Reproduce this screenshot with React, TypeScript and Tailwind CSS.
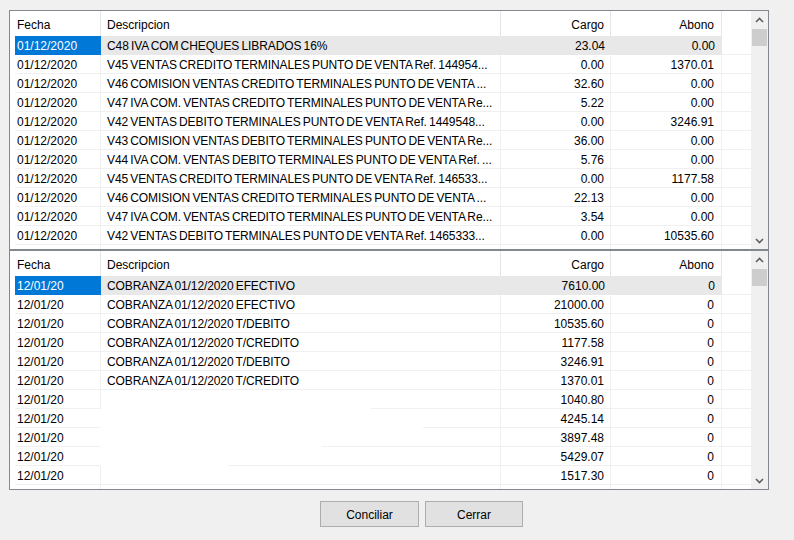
import React from "react";

type Row = {
  fecha: string;
  desc: string;
  cargo: string;
  abono: string;
  // start offset (px) of the visible part of the description cell's bottom rule
  ruleFrom?: number;
  hideFechaRule?: boolean;
};

const movimientos: Row[] = [
  { fecha: "01/12/2020", desc: "C48 IVA COM CHEQUES LIBRADOS 16%", cargo: "23.04", abono: "0.00" },
  { fecha: "01/12/2020", desc: "V45 VENTAS CREDITO TERMINALES PUNTO DE VENTA Ref. 144954...", cargo: "0.00", abono: "1370.01" },
  { fecha: "01/12/2020", desc: "V46 COMISION VENTAS CREDITO TERMINALES PUNTO DE VENTA ...", cargo: "32.60", abono: "0.00" },
  { fecha: "01/12/2020", desc: "V47 IVA COM. VENTAS CREDITO TERMINALES PUNTO DE VENTA Re...", cargo: "5.22", abono: "0.00" },
  { fecha: "01/12/2020", desc: "V42 VENTAS DEBITO TERMINALES PUNTO DE VENTA Ref. 1449548...", cargo: "0.00", abono: "3246.91" },
  { fecha: "01/12/2020", desc: "V43 COMISION VENTAS DEBITO TERMINALES PUNTO DE VENTA Re...", cargo: "36.00", abono: "0.00" },
  { fecha: "01/12/2020", desc: "V44 IVA COM. VENTAS DEBITO TERMINALES PUNTO DE VENTA Ref. ...", cargo: "5.76", abono: "0.00" },
  { fecha: "01/12/2020", desc: "V45 VENTAS CREDITO TERMINALES PUNTO DE VENTA Ref. 146533...", cargo: "0.00", abono: "1177.58" },
  { fecha: "01/12/2020", desc: "V46 COMISION VENTAS CREDITO TERMINALES PUNTO DE VENTA ...", cargo: "22.13", abono: "0.00" },
  { fecha: "01/12/2020", desc: "V47 IVA COM. VENTAS CREDITO TERMINALES PUNTO DE VENTA Re...", cargo: "3.54", abono: "0.00" },
  { fecha: "01/12/2020", desc: "V42 VENTAS DEBITO TERMINALES PUNTO DE VENTA Ref. 1465333...", cargo: "0.00", abono: "10535.60" },
  { fecha: "", desc: "", cargo: "", abono: "" },
];

const cobranzas: Row[] = [
  { fecha: "12/01/20", desc: "COBRANZA 01/12/2020 EFECTIVO", cargo: "7610.00", abono: "0" },
  { fecha: "12/01/20", desc: "COBRANZA 01/12/2020 EFECTIVO", cargo: "21000.00", abono: "0" },
  { fecha: "12/01/20", desc: "COBRANZA 01/12/2020 T/DEBITO", cargo: "10535.60", abono: "0" },
  { fecha: "12/01/20", desc: "COBRANZA 01/12/2020 T/CREDITO", cargo: "1177.58", abono: "0" },
  { fecha: "12/01/20", desc: "COBRANZA 01/12/2020 T/DEBITO", cargo: "3246.91", abono: "0" },
  { fecha: "12/01/20", desc: "COBRANZA 01/12/2020 T/CREDITO", cargo: "1370.01", abono: "0" },
  { fecha: "12/01/20", desc: "", cargo: "1040.80", abono: "0", ruleFrom: 270 },
  { fecha: "12/01/20", desc: "", cargo: "4245.14", abono: "0", ruleFrom: 322, hideFechaRule: true },
  { fecha: "12/01/20", desc: "", cargo: "3897.48", abono: "0", ruleFrom: 221, hideFechaRule: true },
  { fecha: "12/01/20", desc: "", cargo: "5429.07", abono: "0", ruleFrom: 127, hideFechaRule: true },
  { fecha: "12/01/20", desc: "", cargo: "1517.30", abono: "0" },
  { fecha: "", desc: "", cargo: "", abono: "" },
];

function Chevron({ up }: { up?: boolean }) {
  return (
    <svg width="9" height="6" viewBox="0 0 9 6" className="block">
      <polyline
        points={up ? "1,5 4.5,1.5 8,5" : "1,1 4.5,4.5 8,1"}
        fill="none"
        stroke="#606060"
        strokeWidth="1.6"
      />
    </svg>
  );
}

function ScrollBar() {
  return (
    <div className="flex w-[17px] flex-col bg-[#f0f0f0]">
      <div className="flex h-[17px] items-center justify-center">
        <Chevron up />
      </div>
      <div className="ml-px mt-px h-[17px] w-[15px] bg-[#cdcdcd]" />
      <div className="flex-1" />
      <div className="flex h-[17px] items-center justify-center">
        <Chevron />
      </div>
    </div>
  );
}

function Header() {
  return (
    <div className="flex h-[25px] shrink-0 bg-white pl-[5px]">
      <div className="flex w-[86px] items-center border-r border-[#e5e5e5] pl-[2px] pt-[2px]">Fecha</div>
      <div className="flex w-[400px] items-center border-r border-[#e5e5e5] pl-[6px] pt-[2px]">Descripcion</div>
      <div className="flex w-[110px] items-center justify-end border-r border-[#e5e5e5] pr-[6px] pt-[2px]">Cargo</div>
      <div className="flex w-[111px] items-center justify-end border-r border-[#e5e5e5] pr-[7px] pt-[2px]">Abono</div>
      <div className="w-[29px]" />
    </div>
  );
}

function DataRow({ row, selected }: { row: Row; selected: boolean }) {
  if (selected) {
    return (
      <div className="flex h-[19px] shrink-0 pl-[5px]">
        <div className="flex w-[86px] items-center bg-[#0078d7] pl-[2px] pt-px text-white">{row.fecha}</div>
        <div className="flex w-[400px] items-center bg-[#e8e8e8] pl-[6px] pt-px tracking-[-0.1px] [word-spacing:-1px]">
          {row.desc}
        </div>
        <div className="flex w-[110px] items-center justify-end bg-[#e8e8e8] pr-[6px] pt-px">{row.cargo}</div>
        <div className="flex w-[111px] items-center justify-end bg-[#e8e8e8] pr-[7px] pt-px">{row.abono}</div>
        <div className="w-[29px] border-b border-[#f0f0f0]" />
      </div>
    );
  }
  const redacted = row.ruleFrom !== undefined;
  return (
    <div className="flex h-[19px] shrink-0 pl-[5px]">
      <div
        className={
          "flex w-[86px] items-center border-b border-r border-b-[#f0f0f0] pl-[2px] pt-[2px] " +
          (row.hideFechaRule ? "border-r-white" : "border-r-[#f0f0f0]")
        }
      >
        {row.fecha}
      </div>
      {redacted ? (
        <div className="flex w-[400px] flex-col border-r border-[#f0f0f0]">
          <div className="flex-1" />
          <div className="h-px bg-[#f0f0f0]" style={{ marginLeft: row.ruleFrom }} />
        </div>
      ) : (
        <div className="flex w-[400px] items-center overflow-hidden whitespace-nowrap border-b border-r border-[#f0f0f0] pl-[6px] pt-[2px] tracking-[-0.1px] [word-spacing:-1px]">
          {row.desc}
        </div>
      )}
      <div className="flex w-[110px] items-center justify-end border-b border-r border-[#f0f0f0] pr-[6px] pt-[2px]">{row.cargo}</div>
      <div className="flex w-[111px] items-center justify-end border-b border-r border-[#f0f0f0] pr-[7px] pt-[2px]">{row.abono}</div>
      <div className="w-[29px] border-b border-[#f0f0f0]" />
    </div>
  );
}

function Grid({ rows }: { rows: Row[] }) {
  return (
    <div className="flex h-[240px] w-[760px] border border-[#828790] bg-white">
      <div className="flex w-[741px] flex-col overflow-hidden">
        <Header />
        {rows.map((r, i) => (
          <DataRow key={i} row={r} selected={i === 0} />
        ))}
      </div>
      <ScrollBar />
    </div>
  );
}

function Button({ label, w }: { label: string; w: string }) {
  return (
    <button
      className={
        "flex h-[26px] items-center justify-center border border-[#adadad] bg-[#e1e1e1] pt-px text-black " + w
      }
    >
      {label}
    </button>
  );
}

export default function App() {
  return (
    <div
      className="h-[540px] w-[794px] bg-[#f0f0f0] pl-[9px] pt-[10px] text-[12px] leading-none text-black"
      style={{ fontFamily: '"Liberation Sans", Arial, sans-serif' }}
    >
      <Grid rows={movimientos} />
      <Grid rows={cobranzas} />
      <div className="mt-[11px] flex gap-[6px] pl-[311px]">
        <Button label="Conciliar" w="w-[99px]" />
        <Button label="Cerrar" w="w-[98px]" />
      </div>
    </div>
  );
}
